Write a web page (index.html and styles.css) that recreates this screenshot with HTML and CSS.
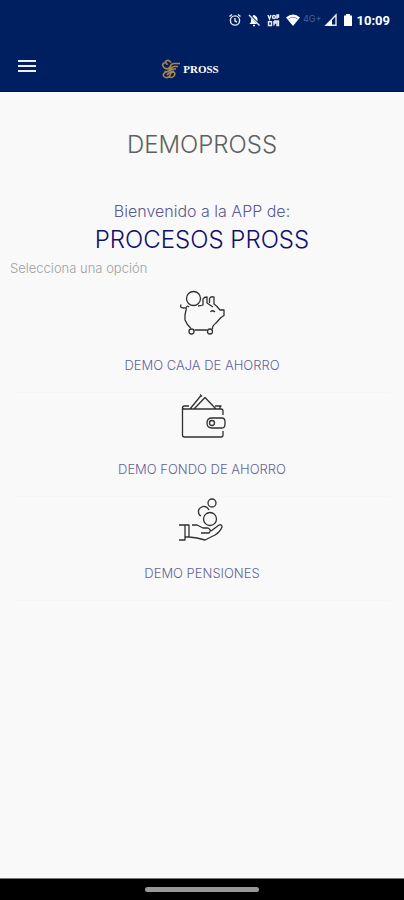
FILE: index.html
```html
<!DOCTYPE html>
<html lang="es">
<head>
<meta charset="utf-8">
<meta name="viewport" content="width=device-width, initial-scale=1">
<title>DEMOPROSS</title>
<link rel="stylesheet" href="styles.css">
</head>
<body>
<header class="top">
  <div class="status">
    <svg class="status-icon" viewBox="0 0 14 14" aria-hidden="true"><circle cx="7" cy="7.5" r="4.6"/><path d="M7 5v3l2 1M1.5 3.500l2.500-2M12.500 3.500l-2.500-2"/></svg>
    <svg class="status-icon" viewBox="0 0 14 14" aria-hidden="true"><path class="solid" d="M4 5l6 6H2.500l1.500-2zM5.500 3.200Q7 1 8.500 3q2 .8 2 3v2.500z"/><path d="M2 2l10.500 10.500M6 12.500h2"/></svg>
    <svg class="status-icon" viewBox="0 0 14 14" aria-hidden="true"><path d="M2 2l1.500 4L5 2M6.500 4a1.500 1.500 0 1 0 3 0a1.500 1.500 0 1 0-3 0M11 6V2h1.500v2H11M2 10q2-3 4 0M2.500 8v4.500h3V8M8 8v4.500M8 8h1.500v2H8M11 8v4.500h1.500V8z"/></svg>
    <svg class="status-icon wifi" viewBox="0 0 16 14" aria-hidden="true"><path class="solid" d="M1 4.500Q8-1.500 15 4.500L8 13z"/><path class="gap" d="M3.500 6q4.500-3.500 9 0"/></svg>
    <span class="network">4G+</span>
    <svg class="status-icon" viewBox="0 0 14 14" aria-hidden="true"><path d="M2 12.300L12 2v10.300z"/><path class="solid" d="M2 12.500l6-6v6z"/></svg>
    <svg class="status-icon battery" viewBox="0 0 10 14" aria-hidden="true"><path class="solid" d="M3 1h4v1.500h2V13H1V2.500h2z"/></svg>
    <time class="clock">10:09</time>
  </div>
  <nav class="bar">
    <button class="menu" type="button" aria-label="Menú"><span class="line"></span><span class="line"></span><span class="line"></span></button>
    <div class="brand">
      <svg class="emblem" viewBox="0 0 20 20" aria-hidden="true"><path d="M19 4.500H13Q10 4.500 9 8Q7 11 3.500 9Q0 6 3 4Q6 3 6 6M4 3Q7-.5 10 3.500M17 7.500H13Q10 8 8.500 11Q6 14 3.500 12M15 10H12Q8 12 5 13Q1 15 3 17.500Q6 20 8.500 17Q10 13 12.500 13Q15 14 13 17Q10 20 8 17M6 16Q8 13 13 12"/></svg>
      <span class="brand-name">PROSS</span>
    </div>
  </nav>
</header>
<main class="content">
  <h1 class="title">DEMOPROSS</h1>
  <p class="welcome">Bienvenido a la APP de:</p>
  <h2 class="company">PROCESOS PROSS</h2>
  <p class="hint">Selecciona una opción</p>
  <ul class="options">
    <li class="option"><a class="option-link" href="#caja">
      <svg class="icon" viewBox="0 0 48 48" aria-hidden="true"><circle cx="15.500" cy="9.500" r="7"/><path d="M3 15.500Q1.500 19 5.500 19Q9.500 18.500 8 21L7 26V31Q9 36 13 39.500M8 19Q9 16 11 18M16.500 41H29M34.500 40Q34 37 38 34L43 28.500L46 26.500V21H42L38.500 17L36 15V8Q33 7 31.500 9.500V14M20 17Q24 16.500 25 16V10Q26 8 29 8V14L35 18M32.500 23Q34 20.500 37 23"/><circle cx="13.500" cy="42.500" r="2.500"/><circle cx="32" cy="42.500" r="2.500"/></svg>
      <span class="label">DEMO CAJA DE AHORRO</span></a></li>
    <li class="option"><a class="option-link" href="#fondo">
      <svg class="icon" viewBox="0 0 48 48" aria-hidden="true"><path d="M11 13H6.500Q4.500 13 4.500 15V42Q4.500 44 6.500 44H43Q45 44 45 42V38M45 22V18Q45 16 43 16H6Q4.500 16 4.500 14M12 16L23 2.500M16 16L27 4.500L38 16M22 1.500L24 3.500M37 13H43L41 16M34 25H44Q47 25 47 29V31Q47 35 44 35H34Q29 35 29 30T34 25z"/><circle cx="34" cy="30" r="2.500"/></svg>
      <span class="label">DEMO FONDO DE AHORRO</span></a></li>
    <li class="option"><a class="option-link" href="#pensiones">
      <svg class="icon" viewBox="0 0 48 48" aria-hidden="true"><circle cx="34" cy="6" r="4"/><circle cx="32" cy="22" r="6.500"/><path d="M31 13Q29 9 25 9.500Q20 11 20.500 15Q20.500 18 23 19M1 28H11V40H7M1 43H7V28M14 28H19L25 31H30Q34 33 31 36H23M33 34L41 28Q44 27 44 30Q42 35 37 38L27 43L19 41L11 40"/></svg>
      <span class="label">DEMO PENSIONES</span></a></li>
  </ul>
</main>
<footer class="gesture"><span class="handle"></span></footer>
</body>
</html>
```
FILE: styles.css
```css
* { box-sizing: border-box; }
body {
  margin: 0;
  min-height: 100vh;
  display: flex;
  flex-direction: column;
  background: #f9f9f9;
  font-family: Inter, "Liberation Sans", sans-serif;
  font-weight: 300;
}
h1, h2, p, ul { margin: 0; padding: 0; font-weight: 300; }
.top { background: #001f61; color: #fff; border-bottom: 1px solid #001245; }
.status {
  height: 40px;
  padding: 0 14px;
  display: flex;
  align-items: center;
  justify-content: flex-end;
  gap: 5px;
}
.status-icon { width: 14px; height: 14px; fill: none; stroke: #e6eaf5; stroke-width: 1.4; }
.status-icon .solid { fill: #fff; stroke: none; }
.status-icon .gap { stroke: #8090b8; stroke-width: 1; }
.wifi { width: 16px; }
.battery { width: 10px; }
.network { font-size: 9px; color: #4c6296; font-weight: 400; margin: -4px -3px 0; }
.clock { font: 700 13px Roboto, sans-serif; margin-left: -1px; }
.bar { height: 51px; display: grid; grid-template-columns: 1fr auto 1fr; align-items: center; padding: 0 18px; }
.menu {
  width: 18px;
  padding: 0;
  border: 0;
  background: none;
  display: grid;
  gap: 3px;
}
.line { height: 2px; background: #f0eff8; }
.brand { display: flex; align-items: center; gap: 2px; padding: 6px 24px 0 0; }
.emblem { width: 20px; height: 20px; fill: none; stroke: #a6854c; stroke-width: 1.6; }
.brand-name { font: 700 11px "Liberation Serif", serif; }
.content { flex: 1; padding: 37px 10px 0; text-align: center; }
.title { font-size: 24px; line-height: 32px; color: #606060; }
.welcome { margin-top: 38px; font-size: 16px; line-height: 24px; color: #5a5a90; }
.company { font-size: 24px; line-height: 34px; color: #10106f; }
.hint { font-size: 13px; line-height: 22px; color: #a0a0a0; text-align: left; }
.options { list-style: none; margin-top: 10px; padding: 0 5px; }
.option { height: 104px; border-bottom: 1px solid #f5f5f6; }
.option-link { display: flex; flex-direction: column; align-items: center; color: #62639a; text-decoration: none; }
.icon { width: 48px; height: 48px; fill: none; stroke: #303030; stroke-width: 1.3; stroke-linejoin: round; }
.label { margin-top: 18px; font-size: 13px; line-height: 20px; }
.gesture { height: 22px; background: #000; border-top: 1px solid #777; display: flex; align-items: center; justify-content: center; }
.handle { width: 28%; height: 5px; border-radius: 3px; background: #999; }
```
